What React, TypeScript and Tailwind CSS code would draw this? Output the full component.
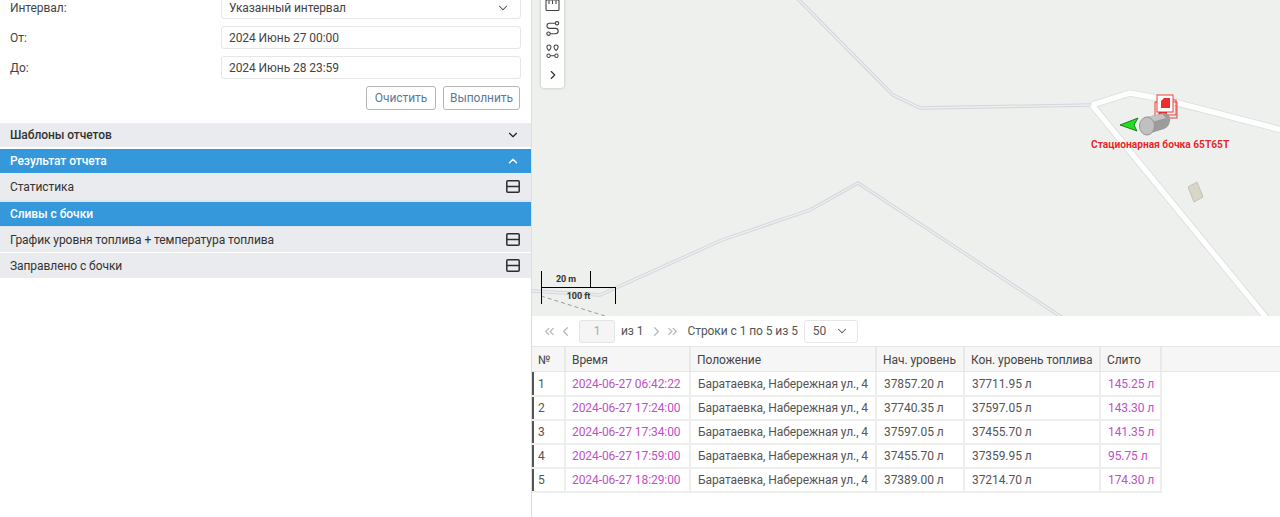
import { ChevronDown, ChevronLeft, ChevronRight, ChevronUp, ChevronsLeft, ChevronsRight } from "lucide-react";

const rows = [
  ["1", "2024-06-27 06:42:22", "37857.20 л", "37711.95 л", "145.25 л"],
  ["2", "2024-06-27 17:24:00", "37740.35 л", "37597.05 л", "143.30 л"],
  ["3", "2024-06-27 17:34:00", "37597.05 л", "37455.70 л", "141.35 л"],
  ["4", "2024-06-27 17:59:00", "37455.70 л", "37359.95 л", "95.75 л"],
  ["5", "2024-06-27 18:29:00", "37389.00 л", "37214.70 л", "174.30 л"],
];

function SplitIcon() {
  return (
    <svg width="14" height="13" viewBox="0 0 14 13" fill="none" stroke="#2f2a33" strokeWidth="1.5">
      <rect x="0.8" y="0.8" width="12.4" height="11.4" rx="1" />
      <path d="M1 6.5h12" />
    </svg>
  );
}

function Field({ label, value, select }: { label: string; value: string; select?: boolean }) {
  return (
    <div className="flex h-[23px] items-center">
      <div className="w-[221px] pl-[10px] text-[#444]">{label}</div>
      <div className="flex h-[23px] w-[300px] items-center justify-between rounded-[3px] border border-[#e6e6e6] bg-white pl-[7px] pr-[10px] text-[#444]">
        <span>{value}</span>
        {select && <ChevronDown size={14} strokeWidth={1.8} color="#444" />}
      </div>
    </div>
  );
}

function Bar({ text, active, h, children }: { text: string; active?: boolean; h: string; children?: React.ReactNode }) {
  return (
    <div className={`flex items-center justify-between pl-[10px] pr-[11px] ${h} ${active ? "bg-[#3498db] font-medium text-white" : "bg-[#eaebef] text-[#333]"}`}>
      <span>{text}</span>
      {children}
    </div>
  );
}

function MapView() {
  return (
    <div className="relative h-[316px] shrink-0 overflow-hidden bg-[#eef0ed]">
      <svg className="absolute inset-0" width="748" height="316" viewBox="532 0 748 316" fill="none">
        <g stroke="#d3d4de" strokeWidth="3.4">
          <path d="M795 -4 L893 95 L920 108 L1092 105" />
          <path d="M532 291 L600 295 L722 240 L810 210 L858 183 L1066 320" />
        </g>
        <g stroke="#eef0ed" strokeWidth="1.4">
          <path d="M795 -4 L893 95 L920 108 L1092 105" />
          <path d="M532 291 L600 295 L722 240 L810 210 L858 183 L1066 320" />
        </g>
        <g stroke="#dcdcde" strokeWidth="7">
          <path d="M1092 105 L1130 93 L1162 99 L1290 132" />
          <path d="M1092 105 L1268 320" />
        </g>
        <g stroke="#ffffff" strokeWidth="5.4">
          <path d="M1092 105 L1130 93 L1162 99 L1290 132" />
          <path d="M1092 105 L1268 320" />
        </g>
        <path d="M541 296 L605 316" stroke="#9a9a9a" strokeWidth="1" strokeDasharray="4 3" />
        <path d="M1188 187 L1197 182 L1203 197 L1194 202 Z" fill="#d8d6c6" stroke="#c4c3b6" />
        <g stroke="#ee3f3f" strokeWidth="1" fill="none">
          <rect x="1155" y="102" width="22" height="16" />
          <rect x="1159" y="100" width="17" height="15" />
          <rect x="1157" y="95" width="16" height="17" fill="#fff" />
        </g>
        <path d="M1161 101 L1164 98 L1170 98 V108 H1161 Z" fill="#ee2b2b" />
        <path d="M1159 112 H1167 V115 H1159 Z" fill="#ee2b2b" />
        <path d="M1120 125 L1138 118 L1134 125 L1137 131 Z" fill="#22e022" stroke="#0b5f0b" strokeWidth="0.8" />
        <path d="M1144 118 L1163 113 Q1171 113 1170 121 Q1169 127 1164 129 L1148 134 Z" fill="#9c9c9c" />
        <path d="M1146 117 L1162 114 L1166 118 L1148 123 Z" fill="#c4c4c4" />
        <ellipse cx="1147" cy="126" rx="7.500" ry="9" fill="#c0c0c0" stroke="#949494" />
      </svg>

      <div className="absolute left-[9px] top-[-8px] flex h-[96px] w-[23px] flex-col items-center rounded-[3px] bg-white pt-[7px] shadow-[0_0_3px_rgba(0,0,0,0.25)]">
        <svg width="15" height="12" viewBox="0 0 15 12" fill="none" stroke="#444" strokeWidth="1.1">
          <rect x="1" y="1" width="13" height="10.500" rx="1" />
          <path d="M4 1.500v3.500M7.500 1.500v3.500M11 1.500v3.500" />
        </svg>
        <svg className="mt-[10px]" width="15" height="15" viewBox="0 0 14 15" fill="none" stroke="#444" strokeWidth="1.1">
          <circle cx="11.500" cy="2.300" r="1.700" />
          <circle cx="3" cy="12.700" r="1.700" />
          <path d="M9.800 2.300H4a2.500 2.500 0 0 0 0 5.100h6a2.600 2.600 0 0 1 0 5.300H4.700" />
        </svg>
        <svg className="mt-[8px]" width="15" height="15" viewBox="0 0 14 16" fill="none" stroke="#444" strokeWidth="1.1">
          <path d="M3.200 1a2.200 2.200 0 0 1 2.200 2.200C5.400 5 3.200 7 3.200 7S1 5 1 3.200A2.200 2.200 0 0 1 3.200 1Z" />
          <path d="M10.800 1A2.200 2.200 0 0 1 13 3.200C13 5 10.800 7 10.800 7S8.600 5 8.600 3.200A2.200 2.200 0 0 1 10.800 1Z" />
          <circle cx="2.800" cy="12.500" r="1.800" />
          <circle cx="11.200" cy="12.500" r="1.800" />
          <path d="M4.600 12.500h4.800" />
        </svg>
        <ChevronRight className="mt-[9px]" size={14} strokeWidth={2} color="#333" />
      </div>

      <div className="absolute left-[9px] top-[271px] h-[16px] w-[50px] border-x border-black text-center text-[9px] font-bold leading-[16px] text-[#333]">20 m</div>
      <div className="absolute left-[9px] top-[287px] h-[17px] w-[75px] border-x border-t border-black text-center text-[9px] font-bold leading-[17px] text-[#333]">100 ft</div>
      <div className="absolute left-[559px] top-[138px] whitespace-nowrap text-[10.200px] font-bold leading-[14px] tracking-normal text-[#e8262b] [text-shadow:0_0_2px_#fff]">Стационарная бочка 65Т65Т</div>
    </div>
  );
}

function Pager() {
  return (
    <div className="flex h-[30px] shrink-0 items-center pl-[10px] text-[#555]">
      <ChevronsLeft size={15} color="#b5b8c0" />
      <ChevronLeft className="ml-[1px]" size={15} color="#b5b8c0" />
      <div className="ml-[6px] flex h-[23px] w-[36px] items-center justify-center rounded-[3px] border border-[#e4e4e4] bg-[#f5f5f5] text-[#aaa]">1</div>
      <span className="ml-[6px]">из 1</span>
      <ChevronRight className="ml-[6px]" size={15} color="#b5b8c0" />
      <ChevronsRight className="ml-[1px]" size={15} color="#b5b8c0" />
      <span className="ml-[7px]">Строки с 1 по 5 из 5</span>
      <div className="ml-[6px] flex h-[23px] w-[54px] items-center justify-between rounded-[3px] border border-[#e6e6e6] pl-[8px] pr-[8px]">
        <span>50</span>
        <ChevronDown size={14} strokeWidth={1.800} color="#555" />
      </div>
    </div>
  );
}

function Cols({ first }: { first: string }) {
  return (
    <colgroup>
      <col className={first} />
      <col className="w-[125px]" />
      <col className="w-[186px]" />
      <col className="w-[88px]" />
      <col className="w-[136px]" />
      <col className="w-[61px]" />
    </colgroup>
  );
}

function ReportTable() {
  const th = "whitespace-nowrap border-r-2 border-[#e8e8e8] pl-[6px] pt-[2px] text-left font-normal text-[#444]";
  const td = "whitespace-nowrap border-r-2 border-b-2 border-[#eeeeee] pl-[6px] text-[#555]";
  return (
    <div className="border-t border-[#e6e6e6]">
      <div className="border-b border-[#e6e6e6] bg-[#f6f6f6]">
        <table className="w-[629px] table-fixed border-collapse">
          <Cols first="w-[33px]" />
          <thead>
            <tr className="h-[24px]">
              <th className={th}>№</th>
              <th className={th}>Время</th>
              <th className={th}>Положение</th>
              <th className={th}>Нач. уровень</th>
              <th className={th}>Кон. уровень топлива</th>
              <th className={th}>Слито</th>
            </tr>
          </thead>
        </table>
      </div>
      <table className="w-[628px] table-fixed border-collapse border-l-2 border-[#555]">
        <Cols first="w-[32px]" />
        <tbody>
          {rows.map((r) => (
            <tr key={r[0]} className="h-[24px]">
              <td className={`${td} !pl-[4px]`}>{r[0]}</td>
              <td className={`${td} !text-[#c04fc8]`}>{r[1]}</td>
              <td className={`${td} !pl-[7px]`}>Баратаевка, Набережная ул., 4</td>
              <td className={`${td} !pl-[7px]`}>{r[2]}</td>
              <td className={`${td} !pl-[7px]`}>{r[3]}</td>
              <td className={`${td} !pl-[7px] !text-[#c04fc8]`}>{r[4]}</td>
            </tr>
          ))}
        </tbody>
      </table>
    </div>
  );
}

export default function App() {
  return (
    <div className="flex h-[517px] w-[1280px] overflow-hidden bg-white font-['Roboto',sans-serif] text-[12px] tracking-[-0.07px]">
      <div className="w-[532px] shrink-0 border-r border-[#dedede]">
        <div className="-mt-[4px] flex flex-col gap-[7px]">
          <Field label="Интервал:" value="Указанный интервал" select />
          <Field label="От:" value="2024 Июнь 27 00:00" />
          <Field label="До:" value="2024 Июнь 28 23:59" />
        </div>
        <div className="mt-[7px] flex justify-end gap-[7px] pr-[11px]">
          <button className="h-[24px] w-[70px] rounded-[3px] border border-[#b5b5b5] text-[#5b7a99]">Очистить</button>
          <button className="h-[24px] w-[77px] rounded-[3px] border border-[#b5b5b5] text-[#5b7a99]">Выполнить</button>
        </div>
        <div className="mt-[13px] flex flex-col">
          <Bar text="Шаблоны отчетов" h="h-[24px] font-medium">
            <ChevronDown size={14} strokeWidth={2} color="#222" />
          </Bar>
          <div className="h-[2px]" />
          <Bar text="Результат отчета" active h="h-[24px]">
            <ChevronUp size={14} strokeWidth={2.400} color="#fff" />
          </Bar>
          <Bar text="Статистика" h="h-[27px]">
            <SplitIcon />
          </Bar>
          <div className="h-[2px] bg-[#dfe6ee]" />
          <Bar text="Сливы с бочки" active h="h-[24px]" />
          <div className="h-[1px] bg-[#dfe6ee]" />
          <Bar text="График уровня топлива + температура топлива" h="h-[25px]">
            <SplitIcon />
          </Bar>
          <div className="h-[1px]" />
          <Bar text="Заправлено с бочки" h="h-[25px]">
            <SplitIcon />
          </Bar>
        </div>
      </div>
      <div className="flex min-w-0 flex-1 flex-col">
        <MapView />
        <Pager />
        <ReportTable />
      </div>
    </div>
  );
}
